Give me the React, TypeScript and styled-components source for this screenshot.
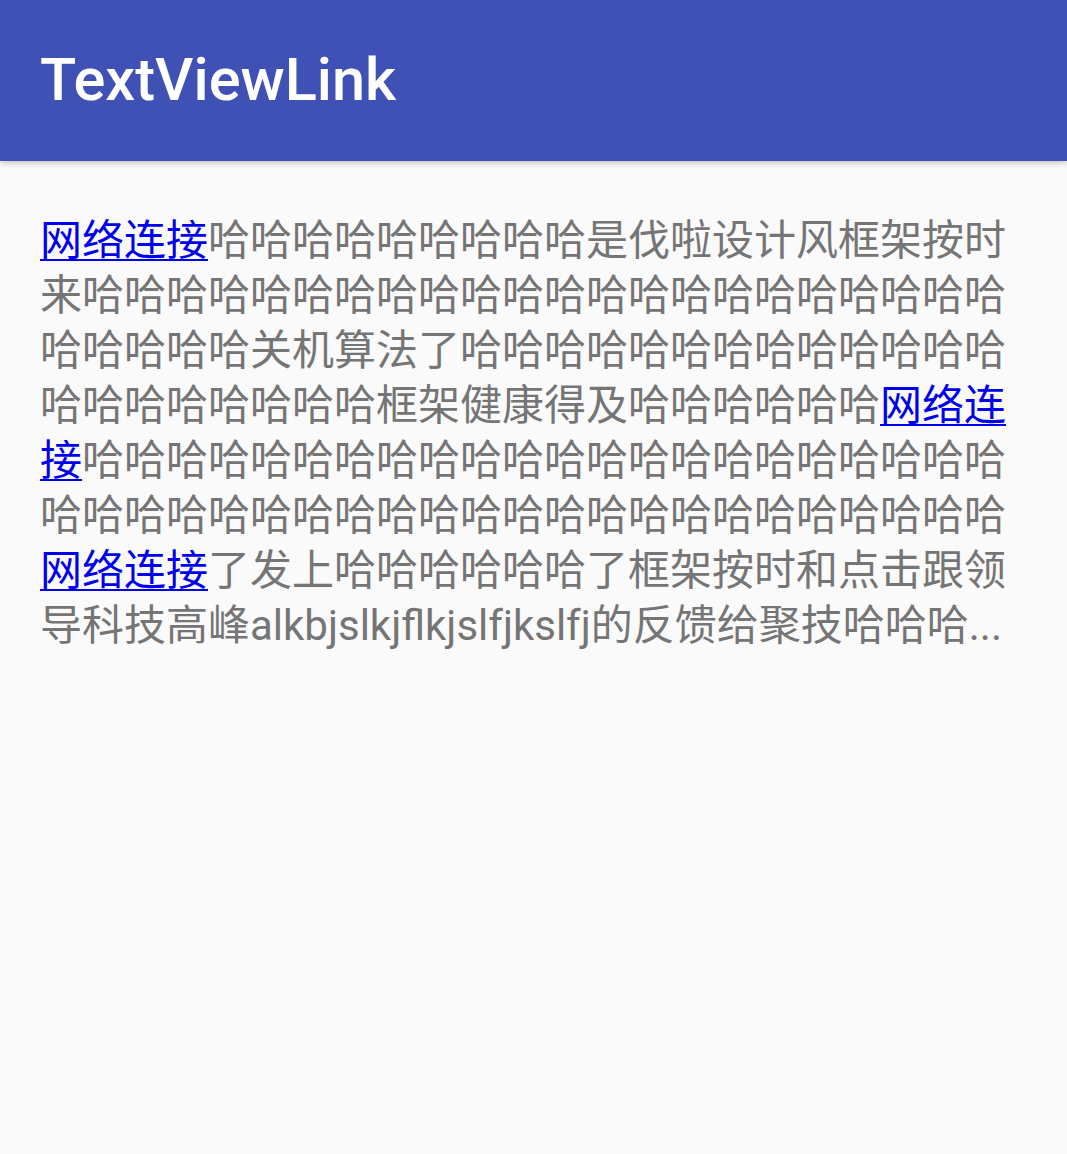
import React from 'react';
import styled, { createGlobalStyle } from 'styled-components';

const GlobalStyle = createGlobalStyle`
  html, body {
    margin: 0;
    padding: 0;
    background: #fafafa;
  }
  body {
    font-family: Roboto, "Noto Sans CJK SC", sans-serif;
  }
`;

const Screen = styled.div`
  width: 1067px;
  min-height: 1154px;
  background: #fafafa;
  display: flex;
  flex-direction: column;
`;

const AppBar = styled.header`
  height: 161px;
  background: #3f51b5;
  display: flex;
  align-items: center;
  padding: 0 40px;
  box-sizing: border-box;
  box-shadow: 0 2px 6px rgba(0, 0, 0, 0.22);
  position: relative;
  z-index: 1;
`;

const Title = styled.h1`
  margin: 0;
  color: #ffffff;
  font-family: Roboto, "Noto Sans CJK SC", sans-serif;
  font-weight: 500;
  font-size: 59.5px;
  line-height: 1;
`;

const Content = styled.main`
  padding: 52px 40px 0;
`;

const Paragraph = styled.p`
  margin: 0;
  color: #757575;
  font-family: Roboto, "Noto Sans CJK SC", sans-serif;
  font-size: 42px;
  line-height: 55px;
  word-break: break-all;
`;

const Link = styled.a`
  color: #0000ee;
  text-decoration: underline;
  text-decoration-thickness: 2px;
  text-underline-offset: 4px;
`;

const ha = (n: number) => '哈'.repeat(n);

const App: React.FC = () => {
  return (
    <>
      <GlobalStyle />
      <Screen>
        <AppBar>
          <Title>TextViewLink</Title>
        </AppBar>
        <Content>
          <Paragraph>
            <Link href="#">网络连接</Link>
            {ha(9)}是伐啦设计风框架按时来{ha(27)}关机算法了{ha(21)}框架健康得及{ha(6)}
            <Link href="#">网络连接</Link>
            {ha(45)}
            <Link href="#">网络连接</Link>
            了发上{ha(6)}了框架按时和点击跟领导科技高峰alkbjslkjflkjslfjkslfj的反馈给聚技哈哈哈...
          </Paragraph>
        </Content>
      </Screen>
    </>
  );
};

export default App;
